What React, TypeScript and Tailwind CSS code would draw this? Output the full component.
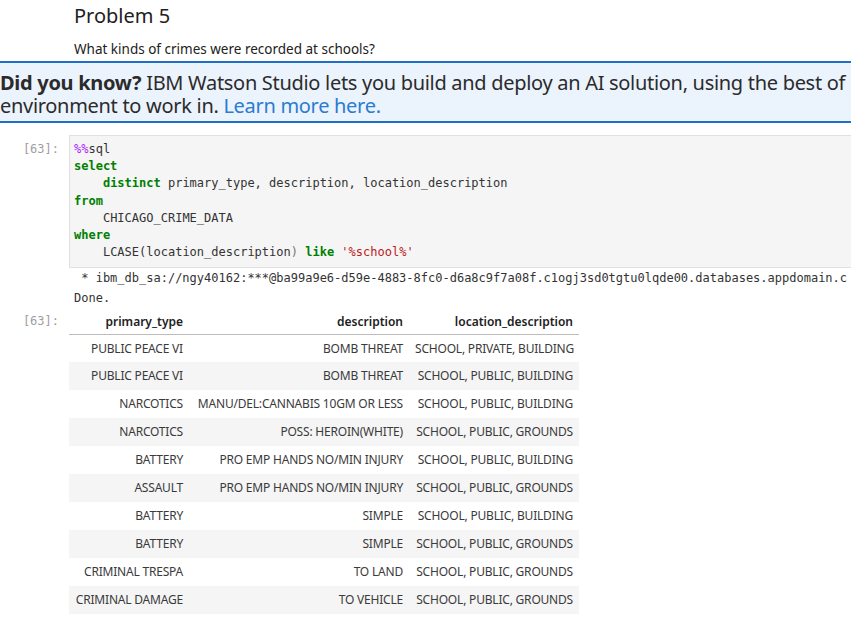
import React from "react";

const sans = { fontFamily: '"Noto Sans", "Open Sans", sans-serif' };
const mono = { fontFamily: '"DejaVu Sans Mono", "Liberation Mono", monospace' };

const rows: [string, string, string][] = [
  ["PUBLIC PEACE VI", "BOMB THREAT", "SCHOOL, PRIVATE, BUILDING"],
  ["PUBLIC PEACE VI", "BOMB THREAT", "SCHOOL, PUBLIC, BUILDING"],
  ["NARCOTICS", "MANU/DEL:CANNABIS 10GM OR LESS", "SCHOOL, PUBLIC, BUILDING"],
  ["NARCOTICS", "POSS: HEROIN(WHITE)", "SCHOOL, PUBLIC, GROUNDS"],
  ["BATTERY", "PRO EMP HANDS NO/MIN INJURY", "SCHOOL, PUBLIC, BUILDING"],
  ["ASSAULT", "PRO EMP HANDS NO/MIN INJURY", "SCHOOL, PUBLIC, GROUNDS"],
  ["BATTERY", "SIMPLE", "SCHOOL, PUBLIC, BUILDING"],
  ["BATTERY", "SIMPLE", "SCHOOL, PUBLIC, GROUNDS"],
  ["CRIMINAL TRESPA", "TO LAND", "SCHOOL, PUBLIC, GROUNDS"],
  ["CRIMINAL DAMAGE", "TO VEHICLE", "SCHOOL, PUBLIC, GROUNDS"],
];

function Prompt({ className = "" }: { className?: string }) {
  return (
    <div
      className={`w-[69px] shrink-0 pr-[10px] text-right text-[12px] leading-[17px] text-[#9e9e9e] ${className}`}
      style={mono}
    >
      [63]:
    </div>
  );
}

export default function App() {
  const kw = "font-bold text-[#008000]";
  return (
    <div className="w-[851px] h-[621px] overflow-hidden bg-white text-[#212121]" style={sans}>
      <div className="pl-[74px] pt-[3px]">
        <div className="text-[20px] leading-[26px]">Problem 5</div>
        <div className="mt-[11px] text-[13.5px] leading-[18px]">
          What kinds of crimes were recorded at schools?
        </div>
      </div>

      <div className="mt-[3px] w-[900px] border-y-2 border-[#1f6fc6] bg-[#ebf3fd] pt-[8px] pb-[4px] text-[20px] leading-[23px] text-[#2b2b2b] whitespace-nowrap tracking-[-0.3px]">
        <div>
          <span className="font-bold">Did you know?</span> IBM Watson Studio lets you build and deploy an AI solution, using the best of
        </div>
        <div>
          environment to work in. <span className="text-[#2a7bd1]">Learn more here.</span>
        </div>
      </div>

      <div className="mt-[12px] flex">
        <Prompt className="pt-[6px]" />
        <div
          className="w-[800px] shrink-0 border border-[#e0e0e0] bg-[#f5f5f5] pl-[4px] pt-[5px] pb-[6px] text-[12px] leading-[17.2px] text-[#333] whitespace-pre"
          style={mono}
        >
          <div>
            <span className="text-[#aa22ff]">%%</span>sql
          </div>
          <div className={kw}>select</div>
          <div>
            {"    "}
            <span className={kw}>distinct</span> primary_type, description, location_description
          </div>
          <div className={kw}>from</div>
          <div>{"    "}CHICAGO_CRIME_DATA</div>
          <div className={kw}>where</div>
          <div>
            {"    "}LCASE(location_description<span className="text-[#777]">)</span>{" "}
            <span className={kw}>like</span> <span className="text-[#ba2121]">'%school%'</span>
          </div>
        </div>
      </div>

      <div className="flex">
        <div className="w-[69px] shrink-0" />
        <div className="w-[782px] overflow-hidden pl-[5px] text-[12px] leading-[20px] text-[#333] whitespace-pre" style={mono}>
          <div>{" * ibm_db_sa://ngy40162:***@ba99a9e6-d59e-4883-8fc0-d6a8c9f7a08f.c1ogj3sd0tgtu0lqde00.databases.appdomain.c"}</div>
          <div>Done.</div>
        </div>
      </div>

      <div className="mt-[1px] flex">
        <Prompt className="pt-[4px]" />
        <table className="w-[510px] table-fixed border-collapse text-[12px] text-[#3a3a3a]">
          <colgroup>
            <col className="w-[120px]" />
            <col className="w-[220px]" />
            <col className="w-[170px]" />
          </colgroup>
          <thead>
            <tr className="h-[25px] border-b border-[#bdbdbd]">
              <th className="px-[6px] text-right font-semibold text-[#212121]">primary_type</th>
              <th className="px-[6px] text-right font-semibold text-[#212121]">description</th>
              <th className="px-[6px] text-right font-semibold text-[#212121]">location_description</th>
            </tr>
          </thead>
          <tbody>
            {rows.map((r, i) => (
              <tr key={i} className={`h-[28px] ${i % 2 === 1 ? "bg-[#f5f5f5]" : "bg-white"}`}>
                {r.map((c, j) => (
                  <td key={j} className="px-[6px] text-right whitespace-nowrap tracking-[-0.2px]">
                    {c}
                  </td>
                ))}
              </tr>
            ))}
          </tbody>
        </table>
      </div>
    </div>
  );
}
